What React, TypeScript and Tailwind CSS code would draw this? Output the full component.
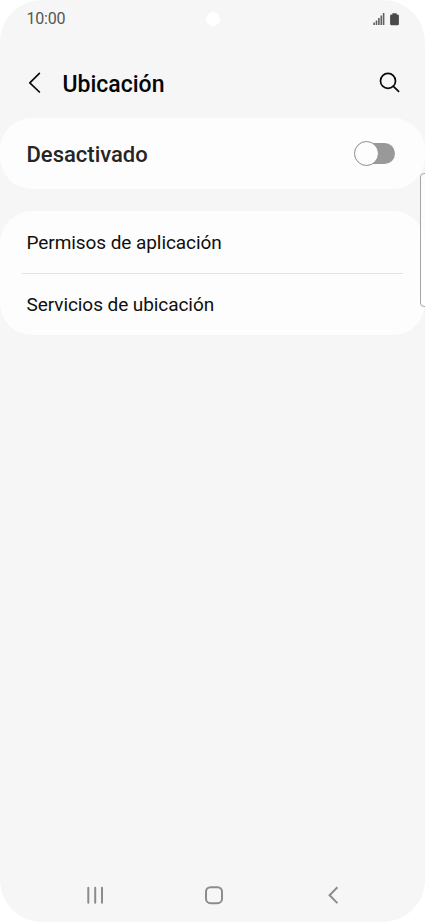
import React from "react";

const StatusBar = () => (
  <div className="relative flex h-[38px] shrink-0 items-center justify-between pl-[26.5px] pr-[26px]">
    <span className="text-[16px] leading-[38px] tracking-[-0.2px] text-[#555555]">10:00</span>
    <span className="absolute left-[206px] top-[12px] h-[14px] w-[14px] rounded-full bg-white" />
    <div className="flex items-center gap-[5px]">
      <svg width="12" height="12" viewBox="0 0 12 12" fill="#606060">
        <rect x="0.3" y="9.5" width="1.6" height="2.5" />
        <rect x="2.7" y="7.5" width="1.6" height="4.5" />
        <rect x="5.1" y="5" width="1.6" height="7" />
        <rect x="7.5" y="2.5" width="1.6" height="9.5" />
        <rect x="9.8" y="0" width="1.6" height="12" />
      </svg>
      <svg width="9" height="13" viewBox="0 0 9 13" fill="#4a4a4a">
        <path d="M2.4 0.2h4.2v1.2h0.9a1.4 1.4 0 0 1 1.4 1.4v8.1a1.4 1.4 0 0 1-1.4 1.4h-6a1.4 1.4 0 0 1-1.4-1.4V2.8a1.4 1.4 0 0 1 1.4-1.4h0.9z" />
      </svg>
    </div>
  </div>
);

const Header = () => (
  <header className="flex h-20 shrink-0 items-center pl-[28px] pr-[25px] pt-[9px]">
    <svg width="14" height="22" viewBox="0 0 14 22" fill="none" stroke="#0a0a0a" strokeWidth="1.7" strokeLinecap="round" strokeLinejoin="round">
      <path d="M11.4 1.4L1.8 10.8l9.6 9.2" />
    </svg>
    <h1 className="ml-[20.5px] flex-1 pt-[4px] text-[23px] font-medium leading-[30px] text-[#050505]">Ubicación</h1>
    <svg width="22" height="22" viewBox="0 0 22 22" fill="none" stroke="#0a0a0a" strokeWidth="1.7" strokeLinecap="round">
      <circle cx="10" cy="8.9" r="7.5" />
      <path d="M15.4 14.4l5.2 5" />
    </svg>
  </header>
);

const Toggle = () => (
  <div className="relative flex h-[25px] w-[41px] items-center justify-end">
    <span className="h-[21px] w-[32px] rounded-full bg-[#999999]" />
    <span className="absolute left-0 top-0 h-[25px] w-[25px] rounded-full border border-[#8c8c8c] bg-[#fdfdfd]" />
  </div>
);

const items = ["Permisos de aplicación", "Servicios de ubicación"];

const NavBar = () => (
  <nav className="mt-auto grid h-[54px] shrink-0 grid-cols-[20px_1fr_14px] items-center pl-[85px] pr-[84px]">
    <svg width="20" height="20" viewBox="0 0 20 20" stroke="#8c8c8c" strokeWidth="2" strokeLinecap="round">
      <path d="M3.3 2.7v15M10.2 2.7v15M17 2.7v15" />
    </svg>
    <svg className="ml-[99px]" width="20" height="20" viewBox="0 0 20 20" fill="none" stroke="#8c8c8c" strokeWidth="2">
      <rect x="2" y="2.2" width="16" height="16" rx="4.5" />
    </svg>
    <svg width="14" height="20" viewBox="0 0 14 20" fill="none" stroke="#8c8c8c" strokeWidth="2">
      <path d="M10.4 2.3L2.6 10.2l7.8 7.9" />
    </svg>
  </nav>
);

export default function App() {
  return (
    <div className="h-[922px] w-[425px] overflow-hidden bg-white font-['Roboto',sans-serif]">
      <div className="relative flex h-full flex-col overflow-hidden rounded-[42px] bg-[#f6f6f6]">
        <StatusBar />
        <Header />

        <section className="flex h-[70.5px] shrink-0 items-center justify-between rounded-[32px] bg-[#fdfdfd] pl-[26.5px] pr-[30px]">
          <span className="pt-[3px] text-[22px] font-medium leading-7 text-[#252525]">Desactivado</span>
          <Toggle />
        </section>

        <section className="mt-[22.5px] h-[124px] shrink-0 rounded-[32px] bg-[#fdfdfd] px-[22px]">
          {items.map((item, index) => (
            <div
              key={item}
              className={index === 0 ? "flex h-[63px] items-center border-b border-[#e2e2e2] pl-[4.5px] pt-[2px]" : "flex h-[61px] items-center pl-[4.5px]"}
            >
              <span className="text-[19px] leading-6 tracking-[-0.07px] text-[#0f0f0f]">{item}</span>
            </div>
          ))}
        </section>

        {/* edge panel handle */}
        <span className="absolute left-[420px] top-[173px] h-[134px] w-3 rounded-[4px] border border-[#a5a5a5] bg-white/70" />

        <NavBar />
      </div>
    </div>
  );
}
